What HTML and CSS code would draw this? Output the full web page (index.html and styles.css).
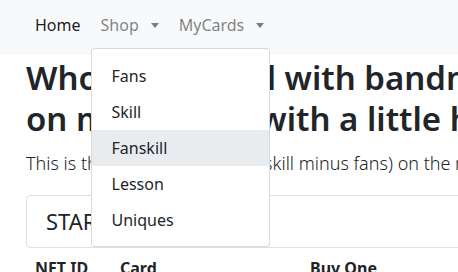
FILE: index.html
```html
<!DOCTYPE html>
<html lang="en">
<head>
  <meta charset="UTF-8" />
  <meta name="viewport" content="width=device-width, initial-scale=1.0" />
  <title>Fanskill</title>
  <link rel="stylesheet" href="styles.css">
</head>
<body>
  <nav class="navbar">
    <ul class="nav">
      <li class="nav-item"><a class="nav-link active" href="#">Home</a></li>
      <li class="nav-item dropdown">
        <a class="nav-link dropdown-toggle" href="#">Shop</a>
        <div class="dropdown-menu">
          <a class="dropdown-item" href="#">Fans</a>
          <a class="dropdown-item" href="#">Skill</a>
          <a class="dropdown-item hover" href="#">Fanskill</a>
          <a class="dropdown-item" href="#">Lesson</a>
          <a class="dropdown-item" href="#">Uniques</a>
        </div>
      </li>
      <li class="nav-item dropdown">
        <a class="nav-link dropdown-toggle" href="#">MyCards</a>
      </li>
    </ul>
  </nav>

  <main class="container">
    <h1>Who do we skill with bandmates on my A-team with a little help</h1>
    <p class="lead">This is the true fanskill value (skill minus fans) on the market right now, sorted by price.</p>

    <div class="card">
      <div class="card-header">STARTING FUNDS</div>
    </div>

    <table class="table">
      <thead>
        <tr>
          <th class="col-id">NFT ID</th>
          <th class="col-card">Card</th>
          <th>Buy One</th>
        </tr>
      </thead>
    </table>
  </main>
</body>
</html>
```

FILE: styles.css
```css
html, body {
  overflow: hidden;
}
body {
  margin: 0;
  font-family: 'Noto Sans', sans-serif;
  font-size: 16px;
  line-height: 24px;
  color: #212529;
  background: #fff;
}
a {
  text-decoration: none;
}

/* navbar */
.navbar {
  background-color: #f8f9fa;
  height: 55px;
  padding: 5px 0 0 27px;
  box-sizing: border-box;
}
.nav {
  display: flex;
  gap: 4px;
  list-style: none;
  margin: 0;
  padding: 0;
}
.nav-item {
  position: relative;
}
.nav-link {
  display: flex;
  align-items: center;
  height: 40px;
  padding: 0 8px;
  color: rgba(0,0,0,0.5);
}
.nav-link.active {
  color: rgba(0,0,0,0.9);
}
.dropdown-toggle::after {
  content: '';
  display: inline-block;
  margin-left: 12px;
  border-top: 5px solid;
  border-left: 4.5px solid transparent;
  border-right: 4.5px solid transparent;
}
.dropdown-menu {
  position: absolute;
  top: 43px;
  left: -2px;
  width: 179px;
  box-sizing: border-box;
  padding: 9px 0 8px;
  background: #fff;
  border: 1px solid rgba(0,0,0,0.15);
  border-radius: 4px;
  z-index: 10;
}
.dropdown-item {
  display: block;
  height: 36px;
  line-height: 36px;
  padding: 0 20px;
  color: #212529;
}
.dropdown-item.hover {
  background-color: #e9ecef;
}

/* content */
.container {
  width: 700px;
  padding: 0 26px;
}
h1 {
  max-width: 540px;
  margin: 2px 0 9px;
  font-size: 33px;
  line-height: 41px;
  font-weight: 600;
}
.lead {
  margin: 0 0 17px;
  font-size: 18px;
  line-height: 30px;
  font-weight: 300;
  white-space: nowrap;
}
.card {
  border: 1px solid rgba(0,0,0,0.125);
  border-radius: 4px;
}
.card-header {
  padding: 12px 19px;
  font-size: 22px;
  line-height: 27px;
}
.table {
  border-collapse: collapse;
  width: 100%;
}
.table th {
  text-align: left;
  padding: 8px 9px;
  font-weight: 700;
}
.col-id {
  width: 67px;
}
.col-card {
  width: 172px;
}
```
